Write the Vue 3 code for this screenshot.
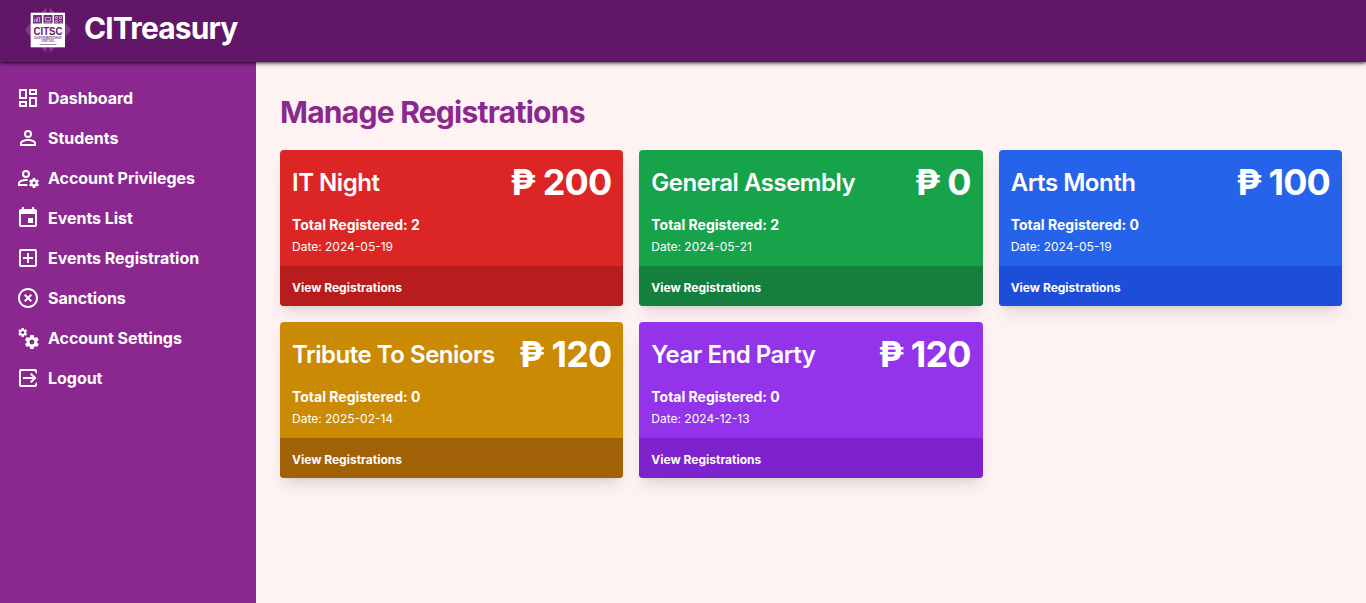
<script setup>
const menu = [
  { label: 'Dashboard', path: 'M19,5V7H15V5H19M9,5V11H5V5H9M19,13V19H15V13H19M9,17V19H5V17H9M21,3H13V9H21V3M11,3H3V13H11V3M21,11H13V21H21V11M11,15H3V21H11V15Z' },
  { label: 'Students', path: 'M12,4A4,4 0 0,1 16,8A4,4 0 0,1 12,12A4,4 0 0,1 8,8A4,4 0 0,1 12,4M12,6A2,2 0 0,0 10,8A2,2 0 0,0 12,10A2,2 0 0,0 14,8A2,2 0 0,0 12,6M12,13C14.67,13 20,14.33 20,17V20H4V17C4,14.33 9.33,13 12,13M12,14.9C9.03,14.9 5.9,16.36 5.9,17V18.1H18.1V17C18.1,16.36 14.97,14.9 12,14.9Z' },
  { label: 'Account Privileges', path: 'M10 4A4 4 0 0 0 6 8A4 4 0 0 0 10 12A4 4 0 0 0 14 8A4 4 0 0 0 10 4M10 6A2 2 0 0 1 12 8A2 2 0 0 1 10 10A2 2 0 0 1 8 8A2 2 0 0 1 10 6M17 12C16.84 12 16.76 12.08 16.76 12.24L16.5 13.5C16.28 13.68 15.96 13.84 15.72 14L14.44 13.5C14.36 13.5 14.2 13.5 14.12 13.6L13.16 15.36C13.08 15.44 13.08 15.6 13.24 15.68L14.28 16.5V17.5L13.24 18.32C13.16 18.4 13.08 18.56 13.16 18.64L14.12 20.4C14.2 20.5 14.36 20.5 14.44 20.5L15.72 20C15.96 20.16 16.28 20.32 16.5 20.5L16.76 21.76C16.76 21.92 16.84 22 17 22H19C19.08 22 19.24 21.92 19.24 21.76L19.4 20.5C19.72 20.32 20.04 20.16 20.28 20L21.5 20.5C21.64 20.5 21.8 20.5 21.8 20.4L22.84 18.64C22.92 18.56 22.84 18.4 22.76 18.32L21.72 17.5V16.5L22.76 15.68C22.84 15.6 22.92 15.44 22.84 15.36L21.8 13.6C21.8 13.5 21.64 13.5 21.5 13.5L20.28 14C20.04 13.84 19.72 13.68 19.4 13.5L19.24 12.24C19.24 12.08 19.08 12 19 12H17M10 13C7.33 13 2 14.33 2 17V20H11.67C11.39 19.41 11.19 18.77 11.09 18.1H3.9V17C3.9 16.36 7.03 14.9 10 14.9C10.43 14.9 10.87 14.94 11.3 15C11.5 14.36 11.77 13.76 12.12 13.21C11.34 13.08 10.6 13 10 13M18.04 15.5C18.84 15.5 19.5 16.16 19.5 17.04C19.5 17.84 18.84 18.5 18.04 18.5C17.16 18.5 16.5 17.84 16.5 17.04C16.5 16.16 17.16 15.5 18.04 15.5Z' },
  { label: 'Events List', path: 'M19,19H5V8H19M16,1V3H8V1H6V3H5C3.89,3 3,3.89 3,5V19A2,2 0 0,0 5,21H19A2,2 0 0,0 21,19V5C21,3.89 20.1,3 19,3H18V1M17,12H12V17H17V12Z' },
  { label: 'Events Registration', path: 'M19,19V5H5V19H19M19,3A2,2 0 0,1 21,5V19A2,2 0 0,1 19,21H5A2,2 0 0,1 3,19V5C3,3.89 3.9,3 5,3H19M11,7H13V11H17V13H13V17H11V13H7V11H11V7Z' },
  { label: 'Sanctions', path: 'M12,20C7.59,20 4,16.41 4,12C4,7.59 7.59,4 12,4C16.41,4 20,7.59 20,12C20,16.41 16.41,20 12,20M12,2C6.47,2 2,6.47 2,12C2,17.53 6.47,22 12,22C17.53,22 22,17.53 22,12C22,6.47 17.53,2 12,2M14.59,8L12,10.59L9.41,8L8,9.41L10.59,12L8,14.59L9.41,16L12,13.41L14.59,16L16,14.59L13.41,12L16,9.41L14.59,8Z' },
  { label: 'Account Settings', path: 'M15.9,18.45C17.25,18.45 18.35,17.35 18.35,16C18.35,14.65 17.25,13.55 15.9,13.55C14.54,13.55 13.45,14.65 13.45,16C13.45,17.35 14.54,18.45 15.9,18.45M21.1,16.68L22.58,17.84C22.71,17.95 22.75,18.13 22.66,18.29L21.26,20.71C21.17,20.86 21,20.92 20.83,20.86L19.09,20.16C18.73,20.44 18.33,20.67 17.91,20.85L17.64,22.7C17.62,22.87 17.47,23 17.3,23H14.5C14.32,23 14.18,22.87 14.15,22.7L13.89,20.85C13.46,20.67 13.07,20.44 12.71,20.16L10.96,20.86C10.81,20.92 10.62,20.86 10.54,20.71L9.14,18.29C9.05,18.13 9.09,17.95 9.22,17.84L10.7,16.68L10.65,16L10.7,15.31L9.22,14.16C9.09,14.05 9.05,13.86 9.14,13.71L10.54,11.29C10.62,11.13 10.81,11.07 10.96,11.13L12.71,11.84C13.07,11.56 13.46,11.32 13.89,11.15L14.15,9.29C14.18,9.13 14.32,9 14.5,9H17.3C17.47,9 17.62,9.13 17.64,9.29L17.91,11.15C18.33,11.32 18.73,11.56 19.09,11.84L20.83,11.13C21,11.07 21.17,11.13 21.26,11.29L22.66,13.71C22.75,13.86 22.71,14.05 22.58,14.16L21.1,15.31L21.15,16L21.1,16.68M6.69,8.07C7.56,8.07 8.26,7.37 8.26,6.5C8.26,5.63 7.56,4.92 6.69,4.92A1.58,1.58 0 0,0 5.11,6.5C5.11,7.37 5.82,8.07 6.69,8.07M10.03,6.94L11,7.68C11.07,7.75 11.09,7.87 11.03,7.97L10.13,9.53C10.08,9.63 9.96,9.67 9.86,9.63L8.74,9.18L8,9.62L7.81,10.81C7.79,10.92 7.7,11 7.59,11H5.79C5.67,11 5.58,10.92 5.56,10.81L5.4,9.62L4.64,9.18L3.52,9.63C3.41,9.67 3.3,9.63 3.24,9.53L2.34,7.97C2.28,7.87 2.31,7.75 2.39,7.68L3.34,6.94L3.31,6.5L3.34,6.06L2.39,5.32C2.31,5.25 2.28,5.13 2.34,5.03L3.24,3.47C3.3,3.37 3.41,3.32 3.52,3.37L4.63,3.82L5.4,3.38L5.56,2.19C5.58,2.08 5.67,2 5.79,2H7.59C7.7,2 7.79,2.08 7.81,2.19L8,3.38L8.74,3.82L9.86,3.37C9.96,3.32 10.08,3.37 10.13,3.47L11.03,5.03C11.09,5.13 11.07,5.25 11,5.32L10.03,6.06L10.06,6.5L10.03,6.94Z' },
  { label: 'Logout', path: 'M5,3H19A2,2 0 0,1 21,5V8L19,6V5H5V19H19V18L21,16V19A2,2 0 0,1 19,21H5A2,2 0 0,1 3,19V5A2,2 0 0,1 5,3M14.09,8.41L15.5,7L20.5,12L15.5,17L14.09,15.59L16.67,13H7V11H16.67Z' },
]

const events = [
  { name: 'IT Night', fee: 200, total: 2, date: '2024-05-19', color: 'red' },
  { name: 'General Assembly', fee: 0, total: 2, date: '2024-05-21', color: 'green' },
  { name: 'Arts Month', fee: 100, total: 0, date: '2024-05-19', color: 'blue' },
  { name: 'Tribute To Seniors', fee: 120, total: 0, date: '2025-02-14', color: 'yellow' },
  { name: 'Year End Party', fee: 120, total: 0, date: '2024-12-13', color: 'purple' },
]
</script>

<template>
  <div class="page">
    <header class="topbar">
      <svg class="logo" viewBox="0 0 48 48">
        <path d="M22.5 1L15 9h7.5ZM25.5 1v8H33ZM22.5 47L15 39h7.5ZM25.5 47v-8H33ZM1 24L9 14v20ZM47 24L39 14v20Z" fill="#833889" />
        <rect x="6.7" y="6.7" width="34.3" height="34.6" fill="#fff" />
        <g fill="#74307c">
          <rect x="9" y="9" width="9" height="8.500" />
          <rect x="19.500" y="9" width="9" height="8.500" />
          <rect x="30" y="9" width="9" height="8.500" />
        </g>
        <g fill="none" stroke="#c9a9cd" stroke-width=".9">
          <path d="M10.500 16v-3h2v3M13.500 16v-4.500h2V16M21.500 11.500h5v3h-5ZM21 16.300h6" />
          <path d="M31.500 10.500h2v2h-2ZM35.500 10.500h2v2h-2ZM31.500 14.200h2v2h-2ZM35 14.500h2.500M36 16.300h2" />
        </g>
        <text x="24" y="28.500" text-anchor="middle" textLength="29" lengthAdjust="spacingAndGlyphs" class="logo-name">CITSC</text>
        <text x="24" y="33" text-anchor="middle" textLength="28" lengthAdjust="spacingAndGlyphs" class="logo-small">COLLEGE OF INFORMATION TECHNOLOGY</text>
        <text x="24" y="36.300" text-anchor="middle" textLength="13" lengthAdjust="spacingAndGlyphs" class="logo-small">STUDENT COUNCIL</text>
        <path d="M15.500 38.500h17" stroke="#8a4b91" stroke-width=".7" />
      </svg>
      <span class="brand">CITreasury</span>
    </header>
    <div class="body">
      <nav class="sidebar">
        <a v-for="item in menu" :key="item.label" class="item">
          <svg class="icon" viewBox="0 0 24 24"><path :d="item.path" fill="currentColor" /></svg>
          <span>{{ item.label }}</span>
        </a>
      </nav>
      <main class="main">
        <h1 class="title">Manage Registrations</h1>
        <section class="grid">
          <article v-for="e in events" :key="e.name" class="card" :class="e.color">
            <div class="info">
              <div class="head">
                <h2 class="name">{{ e.name }}</h2>
                <span class="fee">₱ {{ e.fee }}</span>
              </div>
              <p class="total">Total Registered: {{ e.total }}</p>
              <p class="date">Date: {{ e.date }}</p>
            </div>
            <a class="view">View Registrations</a>
          </article>
        </section>
      </main>
    </div>
  </div>
</template>

<style>
html, body { margin: 0; overflow: hidden; }
</style>

<style scoped>
* { box-sizing: border-box; margin: 0; }
.page { height: 100vh; display: flex; flex-direction: column; font-family: Inter, sans-serif; background: #fef2f2; color: #fff; }
.topbar { height: 62px; flex: none; display: flex; align-items: flex-start; padding: 6px 24px 0; background: #611767; box-shadow: 0 1px 4px rgba(0, 0, 0, .85); z-index: 1; }
.logo { width: 48px; height: 48px; flex: none; overflow: visible; }
.logo-name { font: 700 11.5px "Liberation Sans", sans-serif; fill: #611767; }
.logo-small { font: 700 2.6px "Liberation Sans", sans-serif; fill: #611767; }
.brand { margin-left: 12px; margin-top: 4px; font-size: 30px; line-height: 36px; font-weight: 700; letter-spacing: -.88px; }
.body { flex: 1; display: flex; min-height: 0; }
.sidebar { width: 256px; flex: none; background: #8a2890; padding: 16px 8px; }
.item { height: 40px; display: flex; align-items: center; gap: 8px; padding: 0 8px; font-size: 16px; font-weight: 700; letter-spacing: -.03px; }
.icon { width: 24px; height: 24px; flex: none; }
.main { flex: 1; padding: 32px 24px; }
.title { color: #8a2890; font-size: 30px; line-height: 36px; font-weight: 700; letter-spacing: -.75px; }
.grid { display: grid; grid-template-columns: repeat(3, minmax(0, 1fr)); gap: 16px; margin-top: 20px; }
.card { border-radius: 4px; overflow: hidden; box-shadow: 0 10px 15px -3px rgba(0, 0, 0, .1), 0 4px 6px -4px rgba(0, 0, 0, .1); }
.info { height: 116px; padding: 12px; }
.head { height: 40px; display: flex; justify-content: space-between; align-items: center; }
.name { padding-top: 2px; font-size: 24px; line-height: 32px; font-weight: 600; letter-spacing: -.48px; }
.fee { font-size: 36px; line-height: 40px; font-weight: 700; letter-spacing: -.9px; }
.total { margin-top: 13px; font-size: 14px; line-height: 20px; font-weight: 700; }
.date { margin-top: 4px; font-size: 12px; line-height: 16px; }
.view { height: 40px; display: block; padding: 14px 12px 0; font-size: 12px; line-height: 16px; font-weight: 700; }
.red { background: #dc2626; }
.red .view { background: #b91c1c; }
.green { background: #16a34a; }
.green .view { background: #15803d; }
.blue { background: #2563eb; }
.blue .view { background: #1d4ed8; }
.yellow { background: #ca8a04; }
.yellow .view { background: #a16207; }
.purple { background: #9333ea; }
.purple .view { background: #7e22ce; }
</style>
